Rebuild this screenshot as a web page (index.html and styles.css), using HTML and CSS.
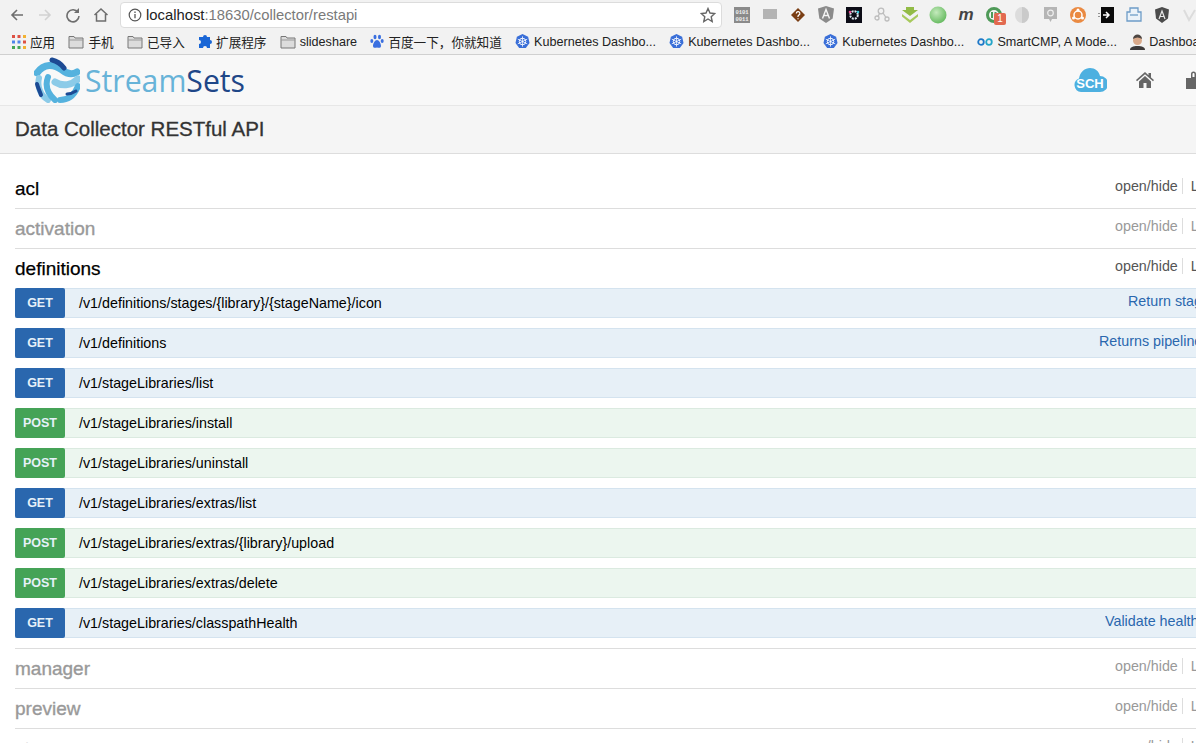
FILE: index.html
```html
<!DOCTYPE html>
<html lang="en">
<head>
  <meta charset="UTF-8">
  <title>Data Collector RESTful API</title>
  <link rel="stylesheet" href="styles.css">
</head>
<body>
  <svg class="sprite" width="0" height="0">
    <symbol id="folder" viewBox="0 0 16 14">
      <path d="M1 3V1.500h5l1 1.500h8v10H1z" fill="#dcdcdc" stroke="#777"/>
      <path d="M1 5h14" stroke="#999"/>
    </symbol>
    <symbol id="kube" viewBox="0 0 16 16">
      <path d="M8 0l6 3 1.500 6.500L11.500 15h-7L.5 9.500 2 3z" fill="#3a6fd8"/>
      <circle cx="8" cy="8" r="3.500" fill="none" stroke="#fff"/>
      <path d="M8 2.500v11M3 5.500l10 5M13 5.500l-10 5" stroke="#fff" stroke-width=".8"/>
    </symbol>
  </svg>

  <div class="toolbar">
    <div class="nav-buttons">
      <svg width="16" height="16" viewBox="0 0 16 16"><path d="M14 8H3M8 3L3 8l5 5" fill="none" stroke="#6e6e6e" stroke-width="1.600"/></svg>
      <svg width="16" height="16" viewBox="0 0 16 16"><path d="M2 8h11M8 3l5 5-5 5" fill="none" stroke="#d2d2d2" stroke-width="1.600"/></svg>
      <svg width="16" height="16" viewBox="0 0 16 16"><path d="M13 5.500A6 6 0 1 0 14 9" fill="none" stroke="#6e6e6e" stroke-width="1.600"/><path d="M14 1v5H9z" fill="#6e6e6e"/></svg>
      <svg width="16" height="16" viewBox="0 0 16 16"><path d="M1.500 8L8 2l6.500 6M3.500 7v7h9V7" fill="none" stroke="#6e6e6e" stroke-width="1.500"/></svg>
    </div>
    <div class="address-bar">
      <svg width="14" height="14" viewBox="0 0 14 14"><circle cx="7" cy="7" r="5.800" fill="none" stroke="#555" stroke-width="1.200"/><path d="M7 6v4.200M7 3.500v1.400" stroke="#555" stroke-width="1.300"/></svg>
      <span class="url"><span class="url-host">localhost</span>:18630/collector/restapi</span>
      <svg class="star" width="16" height="16" viewBox="0 0 16 16"><path d="M8 1.500l2 4.500 4.800.5-3.600 3.200 1 4.800L8 12l-4.200 2.500 1-4.800L1.200 6.500 6 6z" fill="none" stroke="#666" stroke-width="1.400"/></svg>
    </div>
    <div class="extensions">
      <span class="ext"><svg width="16" height="16" viewBox="0 0 16 16"><rect width="16" height="16" fill="#8a8a8a"/><text x="8" y="7" class="bits">0101</text><text x="8" y="14" class="bits">0011</text></svg></span>
      <span class="ext"><svg width="14" height="12" viewBox="0 0 14 12"><rect width="14" height="10" fill="#b4b4b4"/></svg></span>
      <span class="ext"><svg width="16" height="16" viewBox="0 0 16 16"><path d="M8 1l7 7-7 7-7-7z" fill="#7a3e14"/><path d="M6.300 6.500a1.800 1.800 0 1 1 2.500 1.600L8 9v1M8 11.200v1" stroke="#fff" fill="none" stroke-width="1.200"/></svg></span>
      <span class="ext"><svg width="16" height="17" viewBox="0 0 16 17"><path d="M8 0l8 2.500-1.300 10L8 17l-6.700-4.500L0 2.500z" fill="#8b8b8b"/><path d="M4.500 12.500L8 3.500l3.500 9M5.800 9.500h4.400" fill="none" stroke="#f4f4f4" stroke-width="1.400"/></svg></span>
      <span class="ext"><svg width="16" height="16" viewBox="0 0 16 16"><rect width="16" height="16" fill="#0c0c16"/><circle cx="8" cy="8" r="3.800" fill="none" stroke="#e0e8f0" stroke-width="2" stroke-dasharray="2 1"/><circle cx="4" cy="5" r="1.300" fill="#e64a8d"/><circle cx="12" cy="5" r="1.300" fill="#36c5d8"/></svg></span>
      <span class="ext"><svg width="16" height="16" viewBox="0 0 16 16"><g fill="none" stroke="#bdbdbd" stroke-width="1.300"><circle cx="7" cy="4" r="2.800"/><circle cx="3" cy="11" r="2"/><circle cx="13" cy="12" r="2"/><path d="M5.500 6.500l-1.500 3M9 6l3 4.500"/></g></svg></span>
      <span class="ext"><svg width="16" height="16" viewBox="0 0 16 16"><path d="M4 0h8v3h4l-8 6-8-6h4z" fill="#92bb46"/><path d="M0 7l8 6 8-6v2.500L8 16 0 9.500z" fill="#a7c95c"/></svg></span>
      <span class="ext"><svg width="18" height="18" viewBox="0 0 18 18"><defs><radialGradient id="ball" cx=".4" cy=".35" r=".7"><stop offset="0" stop-color="#c4eabc"/><stop offset="1" stop-color="#62b85c"/></radialGradient></defs><circle cx="9" cy="9" r="8.500" fill="url(#ball)"/></svg></span>
      <span class="ext ext-m">m</span>
      <span class="ext ext-badged">
        <svg width="16" height="16" viewBox="0 0 16 16"><circle cx="8" cy="8" r="6.500" fill="none" stroke="#4f9a58" stroke-width="3"/><path d="M6 5v6M9.500 5v6" stroke="#4f9a58" stroke-width="2"/></svg>
        <span class="badge">1</span>
      </span>
      <span class="ext"><svg width="14" height="16" viewBox="0 0 14 16"><ellipse cx="7" cy="8" rx="7" ry="8" fill="#dcdcdc"/><path d="M7 0a7 8 0 0 1 0 16z" fill="#cacaca"/></svg></span>
      <span class="ext"><svg width="13" height="15" viewBox="0 0 13 15"><path d="M0 0h13v12H8l-1.500 3L5 12H0z" fill="#b5b5b5"/><circle cx="6.500" cy="6" r="2.800" fill="none" stroke="#eee" stroke-width="1.200"/></svg></span>
      <span class="ext"><svg width="16" height="16" viewBox="0 0 16 16"><circle cx="8" cy="8" r="8" fill="#ea8a42"/><circle cx="8" cy="8" r="4" fill="none" stroke="#fff" stroke-width="1.500"/><circle cx="8" cy="3" r="1.500" fill="#fff"/><circle cx="3.500" cy="11" r="1.500" fill="#fff"/><circle cx="12.500" cy="11" r="1.500" fill="#fff"/></svg></span>
      <span class="ext"><svg width="16" height="16" viewBox="0 0 16 16"><rect x="3" width="13" height="16" fill="#0b0b0b"/><path d="M8 5l3 3-3 3M5 8h6" fill="none" stroke="#fff" stroke-width="1.500"/><path d="M1 6v1M1 9v1" stroke="#333"/></svg></span>
      <span class="ext"><svg width="16" height="15" viewBox="0 0 16 15"><path d="M1 5h3V1h8v4h3v9H1z" fill="#eaf2f9" stroke="#6d9cc7" stroke-width="1.300"/><path d="M4 8h8" stroke="#6d9cc7" stroke-width="1.300"/></svg></span>
      <span class="ext"><svg width="16" height="16" viewBox="0 0 16 16"><path d="M8 0l7 2.500-1 9L8 16l-6-4.500-1-9z" fill="#4b4b4b"/><path d="M5 12l3-8 3 8M6 9.500h4" fill="none" stroke="#e8e8e8" stroke-width="1.200"/></svg></span>
      <span class="ext"><svg width="14" height="14" viewBox="0 0 14 14"><path d="M1 2l5 10 6-10" fill="none" stroke="#dcdcdc" stroke-width="2"/></svg></span>
    </div>
  </div>

  <div class="bookmarks">
    <span class="bookmark">
      <svg class="bm-icon" width="14" height="14" viewBox="0 0 14 14">
        <g fill="#dd5144"><rect width="3" height="3"/><rect x="5.500" width="3" height="3"/></g>
        <rect x="11" width="3" height="3" fill="#f2b233"/>
        <g fill="#4f86ec"><rect y="5.500" width="3" height="3"/><rect x="5.500" y="5.500" width="3" height="3"/></g>
        <rect x="11" y="5.500" width="3" height="3" fill="#dd5144"/>
        <g fill="#46a658"><rect y="11" width="3" height="3"/><rect x="5.500" y="11" width="3" height="3"/></g>
        <rect x="11" y="11" width="3" height="3" fill="#f2b233"/>
      </svg>应用
    </span>
    <span class="bookmark"><svg class="bm-icon" width="16" height="14"><use href="#folder"/></svg>手机</span>
    <span class="bookmark"><svg class="bm-icon" width="16" height="14"><use href="#folder"/></svg>已导入</span>
    <span class="bookmark"><svg class="bm-icon" width="14" height="14" viewBox="0 0 14 14"><path d="M5 2a2 2 0 0 1 4 0h3v3a2 2 0 0 1 0 4v4H9a2 2 0 0 0-4 0H1V9a2 2 0 0 0 0-4V2z" fill="#1a66d6"/></svg>扩展程序</span>
    <span class="bookmark"><svg class="bm-icon" width="16" height="14"><use href="#folder"/></svg>slideshare</span>
    <span class="bookmark"><svg class="bm-icon" width="14" height="15" viewBox="0 0 14 15"><g fill="#3a6fe0"><ellipse cx="5" cy="3" rx="1.500" ry="2.300"/><ellipse cx="9.500" cy="3" rx="1.500" ry="2.300"/><ellipse cx="1.800" cy="7" rx="1.500" ry="2"/><ellipse cx="12.200" cy="7" rx="1.500" ry="2"/><path d="M7 6c2 0 4 3.500 4 6 0 2-2 2-4 1.500C5 14 3 14 3 12c0-2.500 2-6 4-6z"/></g></svg>百度一下，你就知道</span>
    <span class="bookmark"><svg class="bm-icon" width="15" height="15"><use href="#kube"/></svg>Kubernetes Dashbo...</span>
    <span class="bookmark"><svg class="bm-icon" width="15" height="15"><use href="#kube"/></svg>Kubernetes Dashbo...</span>
    <span class="bookmark"><svg class="bm-icon" width="15" height="15"><use href="#kube"/></svg>Kubernetes Dashbo...</span>
    <span class="bookmark"><svg class="bm-icon" width="16" height="8" viewBox="0 0 16 8"><circle cx="4" cy="4" r="2.800" fill="none" stroke="#1e78c8" stroke-width="1.800"/><circle cx="12" cy="4" r="2.800" fill="none" stroke="#25a5c8" stroke-width="1.800"/></svg>SmartCMP, A Mode...</span>
    <span class="bookmark"><svg class="bm-icon" width="15" height="16" viewBox="0 0 15 16"><path d="M0 16c0-3 3-4 7.500-4s7.500 1 7.500 4z" fill="#3d3a3a"/><circle cx="7.500" cy="6.500" r="4.500" fill="#d9a98a"/><path d="M3 5c0-6 9-6 9 0-3-2-6-2-9 0z" fill="#4d4642"/></svg>Dashboard</span>
  </div>

  <header class="app-header">
    <a class="logo">
      <svg width="46" height="46" viewBox="0 0 46 46">
        <g fill="none" stroke-linecap="round">
          <path d="M3 16C10 6 20 7 28 13c5 4 10 5 15 2" stroke="#55b2de" stroke-width="7"/>
          <path d="M18 3c5 1 9 4 12 8" stroke="#1c4a94" stroke-width="5"/>
          <path d="M5 21c-2 8 1 17 9 22" stroke="#8ccbe8" stroke-width="6"/>
          <path d="M14 20c-3 8-1 16 7 23" stroke="#55b2de" stroke-width="6"/>
          <path d="M3 27c1 4 3 8 4 11" stroke="#1c4a94" stroke-width="4"/>
          <path d="M21 25c8 5 17 3 23-3" stroke="#8ccbe8" stroke-width="7"/>
          <path d="M26 43c9 0 15-6 18-14" stroke="#55b2de" stroke-width="6"/>
          <path d="M33 37c3 0 6-1 9-3" stroke="#1c4a94" stroke-width="3"/>
        </g>
      </svg>
      <span class="logo-text">Stream<span class="logo-sets">Sets</span></span>
    </a>
    <div class="header-icons">
      <svg class="sch" width="34" height="26" viewBox="0 0 34 26">
        <path d="M8 25a7 7 0 0 1-2-13.500C7 5 12 1 17 1c5 0 9 3 10 8a8 8 0 0 1 0 16z" fill="#4db0e0"/>
        <text x="17" y="21" class="sch-text">SCH</text>
      </svg>
      <svg width="18" height="16" viewBox="0 0 18 16"><path d="M9 0L0 8l1 1.200L9 2.300l8 6.900L18 8l-3-2.600V1h-2.500v2.200z" fill="#666"/><path d="M3 9.500L9 4l6 5.500V16h-4.500v-5h-3v5H3z" fill="#666"/></svg>
      <svg class="cut-icon" width="18" height="18" viewBox="0 0 18 18"><path d="M0 7h18v11H0zM5 7V3a2.500 2.500 0 0 1 5 0v4" fill="#666"/><path d="M6.500 6V3a1 1 0 0 1 2 0v3z" fill="#fff"/></svg>
    </div>
  </header>

  <div class="page-title">Data Collector RESTful API</div>

  <main class="api-list">
    <section class="resource">
      <div class="resource-head">
        <h2>acl</h2>
        <div class="actions"><span class="action">open/hide</span><span class="action">List Operations</span></div>
      </div>
    </section>

    <section class="resource resource-muted">
      <div class="resource-head">
        <h2>activation</h2>
        <div class="actions"><span class="action">open/hide</span><span class="action">List Operations</span></div>
      </div>
    </section>

    <section class="resource">
      <div class="resource-head">
        <h2>definitions</h2>
        <div class="actions"><span class="action">open/hide</span><span class="action">List Operations</span></div>
      </div>
      <div class="op op-get"><span class="method">GET</span><span class="path">/v1/definitions/stages/{library}/{stageName}/icon</span><span class="summary summary-icon">Return stage icon</span></div>
      <div class="op op-get"><span class="method">GET</span><span class="path">/v1/definitions</span><span class="summary summary-pipeline">Returns pipeline definitions</span></div>
      <div class="op op-get"><span class="method">GET</span><span class="path">/v1/stageLibraries/list</span></div>
      <div class="op op-post"><span class="method">POST</span><span class="path">/v1/stageLibraries/install</span></div>
      <div class="op op-post"><span class="method">POST</span><span class="path">/v1/stageLibraries/uninstall</span></div>
      <div class="op op-get"><span class="method">GET</span><span class="path">/v1/stageLibraries/extras/list</span></div>
      <div class="op op-post"><span class="method">POST</span><span class="path">/v1/stageLibraries/extras/{library}/upload</span></div>
      <div class="op op-post"><span class="method">POST</span><span class="path">/v1/stageLibraries/extras/delete</span></div>
      <div class="op op-get"><span class="method">GET</span><span class="path">/v1/stageLibraries/classpathHealth</span><span class="summary summary-health">Validate health</span></div>
    </section>

    <section class="resource resource-muted">
      <div class="resource-head">
        <h2>manager</h2>
        <div class="actions"><span class="action">open/hide</span><span class="action">List Operations</span></div>
      </div>
    </section>

    <section class="resource resource-muted">
      <div class="resource-head">
        <h2>preview</h2>
        <div class="actions"><span class="action">open/hide</span><span class="action">List Operations</span></div>
      </div>
    </section>

    <section class="resource resource-muted">
      <div class="resource-head">
        <h2>store</h2>
        <div class="actions"><span class="action">open/hide</span><span class="action">List Operations</span></div>
      </div>
    </section>
  </main>
</body>
</html>
```

FILE: styles.css
```css
* {
  box-sizing: border-box;
}

html, body {
  height: 743px;
  overflow: hidden;
}

body {
  margin: 0;
  background-color: #fff;
  font-family: "Liberation Sans", Arial, "Noto Sans CJK SC", sans-serif;
  color: #333;
}

.sprite {
  position: absolute;
}

/* Browser chrome */
.toolbar {
  display: flex;
  align-items: center;
  height: 29px;
  padding-left: 9px;
  background-color: #f2f2f2;
}

.nav-buttons {
  display: flex;
  gap: 12px;
  width: 111px;
  flex: none;
}

.address-bar {
  display: flex;
  align-items: center;
  gap: 4px;
  width: 602px;
  height: 26px;
  padding: 0 5px 0 7px;
  background-color: #fff;
  border: 1px solid #dcdcdc;
  border-radius: 4px;
  flex: none;
}

.url {
  flex: 1;
  font-size: 14.8px;
  color: #7a7a7a;
}

.url-host {
  color: #222;
}

.extensions {
  display: flex;
  margin-left: 6px;
  flex: none;
}

.ext {
  display: flex;
  align-items: center;
  justify-content: center;
  position: relative;
  width: 28px;
  height: 20px;
}

.bits {
  font-family: "Liberation Mono", monospace;
  font-size: 5.5px;
  font-weight: bold;
  fill: #eee;
  text-anchor: middle;
}

.ext-m {
  font-size: 17px;
  font-weight: bold;
  font-style: italic;
  color: #444;
}

.badge {
  position: absolute;
  left: 14px;
  top: 8px;
  width: 12px;
  height: 12px;
  background-color: #e2694f;
  border-radius: 2px;
  font-size: 10px;
  line-height: 12px;
  text-align: center;
  color: #fff;
}

.bookmarks {
  display: flex;
  align-items: center;
  gap: 13.3px;
  height: 26px;
  padding-left: 12px;
  background-color: #f2f2f2;
  border-bottom: 1px solid #d0d0d0;
  font-size: 12.6px;
  color: #222;
  white-space: nowrap;
}

.bookmark {
  display: flex;
  align-items: center;
  gap: 4px;
  flex: none;
}

/* App header */
.app-header {
  display: flex;
  align-items: center;
  height: 51px;
  padding-left: 34px;
  background-color: #f8f8f8;
  border-bottom: 1px solid #e7e7e7;
}

.logo {
  display: flex;
  align-items: center;
  gap: 5px;
}

.logo-text {
  font-family: "Open Sans", sans-serif;
  font-size: 30.2px;
  color: #67b3d8;
}

.logo-sets {
  color: #1f4788;
}

.header-icons {
  display: flex;
  align-items: center;
  gap: 29px;
  margin-left: auto;
  margin-right: -8px;
}

.cut-icon {
  margin-left: 3px;
}

.sch-text {
  font-family: "Liberation Sans", sans-serif;
  font-size: 13px;
  font-weight: bold;
  fill: #fff;
  text-anchor: middle;
}

.page-title {
  height: 48px;
  padding: 11px 15px 0;
  background-color: #f5f5f5;
  border-bottom: 1px solid #ddd;
  font-size: 20.5px;
  -webkit-text-stroke: 0.3px #333;
}

/* Swagger resources */
.api-list {
  padding: 15px 0 0 15px;
}

.resource {
  border-bottom: 1px solid #ddd;
}

.resource-head {
  display: flex;
  align-items: center;
  justify-content: space-between;
  height: 39px;
}

.resource-head h2 {
  margin: 1px 0 0;
  font-size: 19px;
  font-weight: normal;
  color: #000;
  -webkit-text-stroke: 0.25px #000;
}

.resource-muted h2 {
  color: #999;
  -webkit-text-stroke: 0.35px #999;
}

.actions {
  display: flex;
  width: 81px;
  overflow: hidden;
  white-space: nowrap;
  margin-top: -5px;
  font-size: 14.3px;
  color: #555;
  flex: none;
}

.resource-muted .actions {
  color: #999;
}

.action {
  flex: none;
}

.action:first-child {
  padding-right: 4px;
  margin-right: 8px;
  border-right: 1px solid #ddd;
}

.op {
  display: flex;
  align-items: center;
  height: 30px;
  margin-bottom: 10px;
  border: 1px solid;
  border-width: 1px 0;
  font-size: 14.3px;
  color: #000;
}

.op-get {
  background-color: #e7f0f7;
  border-color: #d4e3ef;
}

.op-post {
  background-color: #ecf6ef;
  border-color: #dbeae0;
}

.method {
  width: 50px;
  height: 30px;
  line-height: 31px;
  text-align: center;
  border-radius: 2px;
  font-size: 12.5px;
  font-weight: bold;
  color: #e6f0f8;
  flex: none;
}

.op-get .method {
  background-color: #2a67ae;
}

.op-post .method {
  background-color: #45a357;
}

.path {
  flex: 1;
  padding: 0 0 0 14px;
}

.summary {
  overflow: hidden;
  white-space: nowrap;
  margin-top: -5px;
  color: #2a67ae;
  flex: none;
}

.summary-icon {
  width: 68px;
}

.summary-pipeline {
  width: 97px;
}

.summary-health {
  width: 91px;
}
```
